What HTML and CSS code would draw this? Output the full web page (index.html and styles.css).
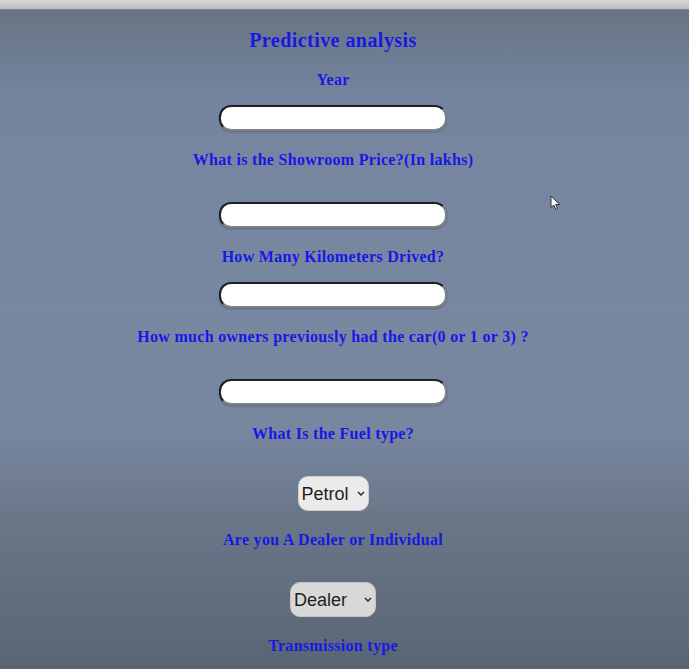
FILE: index.html
```html
<!DOCTYPE html>
<html lang="en">
<head>
<meta charset="utf-8">
<title>Predictive analysis</title>
<link rel="stylesheet" href="styles.css">
</head>
<body>
<div class="topbar"></div>
<main class="page">
  <form class="form">
    <h1 class="title">Predictive analysis</h1>
    <label class="label">Year</label>
    <input class="field" type="text">
    <label class="label tall">What is the Showroom Price?(In lakhs)</label>
    <input class="field" type="text">
    <label class="label">How Many Kilometers Drived?</label>
    <input class="field" type="text">
    <label class="label tall">How much owners previously had the car(0 or 1 or 3) ?</label>
    <input class="field" type="text">
    <label class="label tall">What Is the Fuel type?</label>
    <span class="select-wrap">
      <select class="choice fuel">
        <option>Petrol</option>
        <option>Diesel</option>
        <option>CNG</option>
      </select>
      <svg class="chev" width="8" height="5" viewBox="0 0 8 5"><path d="M1 1 L4 4 L7 1" fill="none" stroke="#222" stroke-width="1.4"/></svg>
    </span>
    <label class="label tall">Are you A Dealer or Individual</label>
    <span class="select-wrap">
      <select class="choice seller">
        <option>Dealer</option>
        <option>Individual</option>
      </select>
      <svg class="chev" width="8" height="5" viewBox="0 0 8 5"><path d="M1 1 L4 4 L7 1" fill="none" stroke="#222" stroke-width="1.4"/></svg>
    </span>
    <label class="label">Transmission type</label>
  </form>
  <svg class="cursor" width="12" height="16" viewBox="0 0 12 16">
    <path d="M1 1 L1 12.5 L3.8 10 L5.8 14.5 L7.6 13.7 L5.7 9.4 L9.5 9.4 Z" fill="#fff" stroke="#2a2f38" stroke-width="1"/>
  </svg>
</main>
<div class="redline"></div>
</body>
</html>
```

FILE: styles.css
```css
html, body {
  margin: 0;
  padding: 0;
  height: 100%;
  overflow: hidden;
}

body {
  display: flex;
  flex-direction: column;
  background: #5a6574;
}

.topbar {
  height: 9px;
  flex: none;
  background: linear-gradient(#d6d6d6, #bdbdbd);
  border-bottom: 1px solid #7d838c;
}

.page {
  position: relative;
  flex: 1;
  background: linear-gradient(#687484 0px, #7585a0 90px, #7888a0 300px, #7886a0 420px, #6b788a 500px, #5a6574 657px);
}

.form {
  width: 666px;
  display: flex;
  flex-direction: column;
  align-items: center;
  padding-top: 18px;
}

.title {
  margin: 0 0 16px;
  font-family: "Liberation Serif", "Times New Roman", serif;
  font-size: 20px;
  line-height: 24px;
  font-weight: bold;
  letter-spacing: 0.45px;
  color: #1818e4;
}

.label {
  display: block;
  padding-top: 2px;
  margin-bottom: 15px;
  font-family: "Liberation Serif", "Times New Roman", serif;
  font-size: 16px;
  line-height: 20px;
  font-weight: bold;
  letter-spacing: 0.3px;
  color: #1818e4;
}

.label.tall {
  margin-bottom: 32px;
}

.field {
  box-sizing: border-box;
  width: 228px;
  height: 26px;
  margin: 0 0 17px;
  padding: 0 8px;
  background: #fff;
  border: 2px solid;
  border-color: #1c1f24 #7e8288 #7e8288 #1c1f24;
  border-radius: 12px;
  box-shadow: 0 1px 2px rgba(40, 45, 55, 0.35);
  outline: none;
}

.select-wrap {
  position: relative;
  display: block;
  margin: 0 0 17px;
}

.choice {
  display: block;
  box-sizing: border-box;
  height: 35px;
  margin: 0;
  padding: 0 0 0 3px;
  appearance: none;
  -webkit-appearance: none;
  font-family: "Liberation Sans", Arial, sans-serif;
  font-size: 18px;
  color: #1e1e1e;
  background: #ebebeb;
  border: 1px solid #cfcfcf;
  border-radius: 10px;
}

.fuel {
  width: 71px;
}

.seller {
  width: 86px;
  background: #d8d8d8;
  border-color: #c4c4c4;
}

.chev {
  position: absolute;
  right: 4px;
  top: 15px;
  pointer-events: none;
}

.cursor {
  position: absolute;
  left: 550px;
  top: 185px;
}

.redline {
  height: 2px;
  flex: none;
  background: #e81414;
}
```
